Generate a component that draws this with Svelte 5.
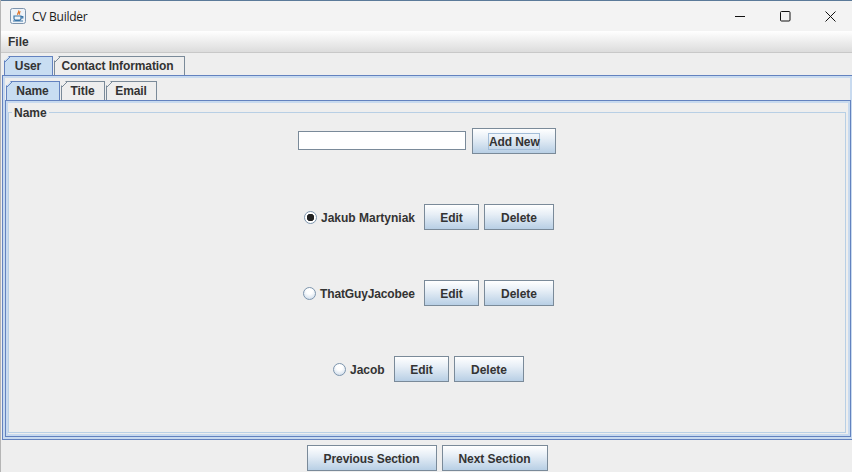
<script>
  const tabsOuter = [
    { label: 'User', width: 49 },
    { label: 'Contact Information', width: 131 }
  ];
  const tabsInner = [
    { label: 'Name', width: 54 },
    { label: 'Title', width: 44 },
    { label: 'Email', width: 51 }
  ];
  const rows = [
    { name: 'Jakub Martyniak', checked: true, width: 94, tight: false },
    { name: 'ThatGuyJacobee', checked: false, width: 95, tight: true },
    { name: 'Jacob', checked: false, width: 35, tight: false }
  ];
</script>

<div class="window">
  <header class="titlebar">
    <svg class="appicon" width="16" height="16" viewBox="0 0 16 16">
      <rect x="0.5" y="0.5" width="15" height="15" rx="2" fill="#eef3f8" stroke="#7d94ad" />
      <path d="M8.500 2.500c1.500 1.500-2 2.500-.6 4.300M10.500 3.500c-1.500 1-1.600 1.800-.6 3" fill="none" stroke="#e2762a" stroke-width="1.200" />
      <path d="M4 8h7v2.500c0 1-.8 1.500-1.500 1.500h-4C4.800 12 4 11.500 4 10.500zM11 8.500h1.800v1.500H11M3 13h10" fill="none" stroke="#3b76a8" stroke-width="1.200" />
    </svg>
    <span class="title">CV Builder</span>
    <div class="controls">
      <svg width="11" height="11" viewBox="0 0 11 11"><path d="M0 5.500h10" stroke="#111" /></svg>
      <svg width="11" height="11" viewBox="0 0 11 11"><rect x="0.500" y="0.500" width="9.500" height="9.500" rx="1" fill="none" stroke="#111" /></svg>
      <svg width="11" height="11" viewBox="0 0 11 11"><path d="M0.500 0.500l10 10M10.500 0.500l-10 10" stroke="#111" /></svg>
    </div>
  </header>

  <nav class="menubar"><span>File</span></nav>

  <div class="tabstrip outer">
    {#each tabsOuter as t, i}
      <div class="tab" class:active={i === 0} style="width:{t.width}px">{t.label}</div>
    {/each}
  </div>
  <div class="pane outerpane">
    <div class="tabstrip inner">
      {#each tabsInner as t, i}
        <div class="tab" class:active={i === 0} style="width:{t.width}px">{t.label}</div>
      {/each}
    </div>
    <div class="pane innerpane">
      <fieldset class="group">
        <legend>Name</legend>
        <div class="row first">
          <input class="field" type="text" />
          <button class="btn add"><span class="focus">Add New</span></button>
        </div>
        {#each rows as r}
          <div class="row item">
            <span class="radio" class:on={r.checked}></span>
            <span class="label" class:tight={r.tight} style="width:{r.width}px">{r.name}</span>
            <button class="btn edit">Edit</button>
            <button class="btn del">Delete</button>
          </div>
        {/each}
      </fieldset>
    </div>
  </div>

  <footer class="footer">
    <button class="btn prev">Previous Section</button>
    <button class="btn next">Next Section</button>
  </footer>
</div>

<style>
  :global(body) { margin: 0; background: #eeeeee; }
  .window {
    width: 852px;
    height: 472px;
    overflow: hidden;
    display: flex;
    flex-direction: column;
    font: bold 12px "Liberation Sans", Arial, sans-serif;
    color: #333333;
    background: #eeeeee;
    box-sizing: border-box;
    border-left: 1px solid #b5b5b5;
  }
  .titlebar {
    height: 31px;
    flex: none;
    display: flex;
    align-items: center;
    background: #f3f3f3;
    padding-left: 9px;
    box-sizing: border-box;
    border-top: 1px solid #5b7a99;
  }
  .appicon { flex: none; }
  .title {
    margin-left: 6px;
    font: 400 12px "Open Sans", sans-serif;
    letter-spacing: -0.25px;
    color: #1a1a1a;
  }
  .controls {
    margin-left: auto;
    display: flex;
    gap: 34px;
    padding-right: 16px;
  }
  .menubar {
    height: 21px;
    flex: none;
    display: flex;
    align-items: center;
    padding-left: 7px;
    background: linear-gradient(#ffffff, #dcdcdc);
    border-bottom: 1px solid #c8c8c8;
  }
  .tabstrip {
    display: flex;
    align-items: flex-end;
    flex: none;
    box-sizing: border-box;
  }
  .tabstrip.outer { height: 22px; padding-left: 3px; }
  .tabstrip.inner { height: 24px; padding-left: 1px; }
  .tab {
    height: 19px;
    box-sizing: border-box;
    padding-right: 1px;
    text-align: center;
    line-height: 19px;
    letter-spacing: -0.1px;
    border: 1px solid #7a8a99;
    border-bottom: none;
    clip-path: polygon(5px 0, 100% 0, 100% 100%, 0 100%, 0 5px);
    background: linear-gradient(135deg, transparent 3px, #7a8a99 3px 4.200px, transparent 4.200px), #eeeeee;
    margin-left: 1px;
    white-space: nowrap;
  }
  .tab:first-child { margin-left: 0; }
  .tabstrip.outer .tab:nth-child(2) { padding-right: 4px; }
  .tab.active {
    background: linear-gradient(135deg, transparent 3px, #6382bf 3px 4.200px, transparent 4.200px), #c8ddf2;
    border-color: #6382bf;
  }
  .pane { box-sizing: border-box; }
  .outerpane {
    margin-left: 1px;
    height: 365px;
    flex: none;
    border: 1px solid #6382bf;
    border-right: none;
    box-shadow: inset 0 0 0 2px #c8daef;
    padding: 0 1px 2px 2px;
  }
  .innerpane {
    height: 337px;
    border: 1px solid #6382bf;
    box-shadow: inset 0 0 0 2px #c8daef;
    padding: 4px 4px 2px 2px;
  }
  .group {
    margin: 0;
    padding: 0;
    height: 328px;
    box-sizing: border-box;
    border: 1px solid #b8cfe5;
    display: flex;
    flex-direction: column;
    min-width: 0;
  }
  legend {
    margin-left: 3px;
    padding: 2px 2px 0;
    line-height: 13px;
  }
  .row {
    height: 26px;
    margin-top: 50px;
    display: flex;
    align-items: center;
    justify-content: center;
    gap: 5px;
    flex: none;
  }
  .row.first { margin-top: 8px; gap: 6px; }
  .row.item { padding-left: 3px; }
  .field {
    width: 168px;
    height: 19px;
    box-sizing: border-box;
    border: 1px solid #7a8a99;
    background: #fff;
    padding: 0;
    margin: 0 0 2px;
    outline: none;
  }
  .btn {
    height: 26px;
    box-sizing: border-box;
    border: 1px solid #7a8a99;
    background: linear-gradient(#ffffff, #e6eef6 40%, #b8cfe5);
    font: bold 12px "Liberation Sans", Arial, sans-serif;
    color: #333333;
    padding: 1px 0 0;
    margin: 0;
    white-space: nowrap;
  }
  .add { width: 84px; padding-top: 0; }
  .focus {
    border: 1px solid #a3bdd8;
    display: block;
    margin: 0 auto;
    width: 52px;
    box-sizing: border-box;
    height: 17px;
    line-height: 16px;
    letter-spacing: -0.1px;
  }
  .edit { width: 55px; margin-left: 4px; }
  .del { width: 70px; }
  .prev { width: 130px; letter-spacing: -0.1px; }
  .next { width: 106px; letter-spacing: -0.05px; }
  .label { padding-top: 1px; white-space: nowrap; }
  .label.tight { letter-spacing: -0.14px; }
  .radio {
    width: 13px;
    height: 13px;
    border-radius: 50%;
    box-sizing: border-box;
    border: 1px solid #7d95ad;
    background: radial-gradient(circle at 50% 30%, #fff 30%, #c5d5e6);
    margin-right: -1px;
  }
  .radio.on {
    background: radial-gradient(circle, #222 0 3.500px, #fff 4px);
    margin-left: 1px;
  }
  .footer {
    flex: 1;
    display: flex;
    justify-content: center;
    align-items: flex-start;
    gap: 5px;
    padding-top: 5px;
    padding-left: 1px;
  }
</style>
